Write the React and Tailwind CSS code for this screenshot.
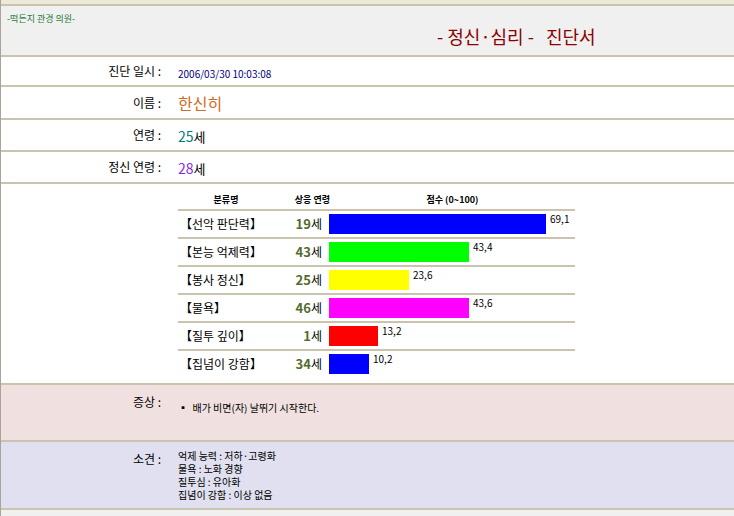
const font = { fontFamily: '"Noto Sans CJK KR", "Liberation Sans", sans-serif' };

const rows = [
  { name: '【선악 판단력】', age: '19', w: 217, v: '69,1', c: 'bg-[#0000ff]' },
  { name: '【본능 억제력】', age: '43', w: 140, v: '43,4', c: 'bg-[#00ff00]' },
  { name: '【봉사 정신】', age: '25', w: 80, v: '23,6', c: 'bg-[#ffff00]' },
  { name: '【물욕】', age: '46', w: 140, v: '43,6', c: 'bg-[#ff00ff]' },
  { name: '【질투 깊이】', age: '1', w: 49, v: '13,2', c: 'bg-[#ff0000]' },
  { name: '【집념이 강함】', age: '34', w: 40, v: '10,2', c: 'bg-[#0000ff]' },
];

function Row({ label, children, className = 'bg-white', h = 'h-[32px]', top = false }) {
  return (
    <div className={`flex ${top ? 'items-start pt-[8px]' : 'items-center'} ${h} border-b-2 border-[#c9c3b0] ${className}`}>
      <div className="w-[163px] shrink-0 pr-[3px] text-right text-[12px] text-black">{label}</div>
      <div className="pl-[14px] flex-1">{children}</div>
    </div>
  );
}

export default function App() {
  return (
    <div className="w-[734px] h-[516px] overflow-hidden bg-[#ece9d8] border-l border-[#a8a498]" style={font}>
      <div className="h-[6px] border-b-2 border-[#c9c3b0]" />
      <div className="h-[51px] bg-[#f0f0f0] border-b-2 border-[#c9c3b0] relative">
        <div className="absolute left-[6px] top-[6px] text-[9px] text-[#1f7a3a]">-떡든지 관경 의원-</div>
        <div className="absolute left-[436px] top-[21px] text-[18px] leading-none text-[#8b0000] whitespace-pre">- 정신·심리 -   진단서</div>
      </div>
      <Row label="진단 일시 :" h="h-[30px]">
        <span className="text-[10px] text-[#000080]">2006/03/30 10:03:08</span>
      </Row>
      <Row label="이름 :" h="h-[33px]">
        <span className="text-[16px] text-[#d2691e]">한신히</span>
      </Row>
      <Row label="연령 :">
        <span className="text-[14px] text-[#008080]">25</span><span className="text-[13px]">세</span>
      </Row>
      <Row label="정신 연령 :">
        <span className="text-[14px] text-[#8a2be2]">28</span><span className="text-[13px]">세</span>
      </Row>
      <div className="h-[201px] bg-white border-b-2 border-[#c9c3b0] pl-[177px] pt-[7px]">
        <div className="w-[397px]">
          <div className="flex h-[18px] items-center text-[9px] font-bold">
            <div className="w-[96px] text-center">분류명</div>
            <div className="w-[56px] text-right">상응 연령</div>
            <div className="flex-1 text-center">점수 (0~100)</div>
          </div>
          {rows.map((r) => (
            <div key={r.name} className="flex items-center h-[28px] border-t-2 border-[#c9c3b0]">
              <div className="w-[96px] text-[12px] pl-[2px]">{r.name}</div>
              <div className="w-[48px] text-right text-[12px]">
                <span className="font-bold text-[#556b2f] text-[13px]">{r.age}</span>세
              </div>
              <div className="flex items-start pl-[7px]">
                <div className={`${r.c} h-[20px]`} style={{ width: r.w }} />
                <span className="text-[10px] pl-[4px] -mt-[3px]">{r.v}</span>
              </div>
            </div>
          ))}
        </div>
      </div>
      <Row label="증상 :" className="bg-[#f0e0e0]" h="h-[57px]" top>
        <span className="text-[10px]">▪&nbsp;&nbsp;배가 비면(자) 날뛰기 시작한다.</span>
      </Row>
      <Row label="소견 :" className="bg-[#e0e0f0]" h="h-[68px]" top>
        <div className="text-[10px] leading-[13px] -mt-[1px]">
          <div>억제 능력 : 저하·고령화</div>
          <div>물욕 : 노화 경향</div>
          <div>질투심 : 유아화</div>
          <div>집념이 강함 : 이상 없음</div>
        </div>
      </Row>
      <div className="h-[10px] bg-[#f0f0f0]" />
    </div>
  );
}
